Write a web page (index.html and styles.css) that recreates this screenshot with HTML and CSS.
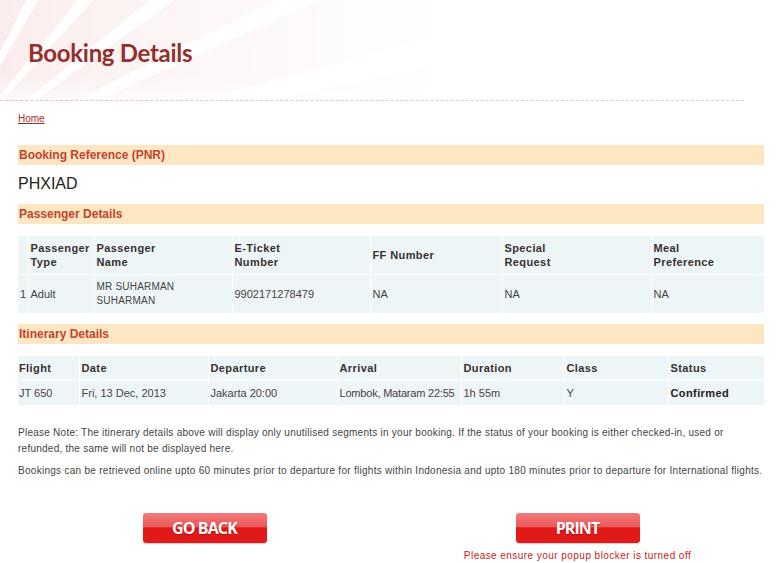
FILE: index.html
```html
<!DOCTYPE html>
<html lang="en">
<head>
    <meta charset="UTF-8">
    <title>Booking Details</title>
    <link rel="stylesheet" href="styles.css">
</head>
<body>
    <div class="page-header">
        <h1>Booking Details</h1>
    </div>
    <div class="content">
        <div class="crumbs"><a href="#">Home</a></div>

        <h2 class="section-bar">Booking Reference (PNR)</h2>
        <div class="pnr">PHXIAD</div>

        <h2 class="section-bar">Passenger Details</h2>
        <table class="grid pax">
            <colgroup>
                <col style="width:10px">
                <col style="width:66px">
                <col style="width:138px">
                <col style="width:138px">
                <col style="width:132px">
                <col style="width:149px">
                <col>
            </colgroup>
            <thead>
                <tr>
                    <th></th>
                    <th>Passenger Type</th>
                    <th>Passenger<br>Name</th>
                    <th>E-Ticket<br>Number</th>
                    <th>FF Number</th>
                    <th>Special<br>Request</th>
                    <th>Meal<br>Preference</th>
                </tr>
            </thead>
            <tbody>
                <tr>
                    <td>1</td>
                    <td>Adult</td>
                    <td class="small">MR SUHARMAN<br>SUHARMAN</td>
                    <td>9902171278479</td>
                    <td>NA</td>
                    <td>NA</td>
                    <td>NA</td>
                </tr>
            </tbody>
        </table>

        <h2 class="section-bar">Itinerary Details</h2>
        <table class="grid itin">
            <colgroup>
                <col style="width:61px">
                <col style="width:129px">
                <col style="width:129px">
                <col style="width:124px">
                <col style="width:103px">
                <col style="width:104px">
                <col>
            </colgroup>
            <thead>
                <tr>
                    <th>Flight</th>
                    <th>Date</th>
                    <th>Departure</th>
                    <th>Arrival</th>
                    <th>Duration</th>
                    <th>Class</th>
                    <th>Status</th>
                </tr>
            </thead>
            <tbody>
                <tr>
                    <td>JT 650</td>
                    <td>Fri, 13 Dec, 2013</td>
                    <td>Jakarta 20:00</td>
                    <td class="tight">Lombok, Mataram 22:55</td>
                    <td>1h 55m</td>
                    <td>Y</td>
                    <td class="status">Confirmed</td>
                </tr>
            </tbody>
        </table>

        <p class="note">Please Note: The itinerary details above will display only unutilised segments in your booking. If the status of your booking is either checked-in, used or refunded, the same will not be displayed here.</p>
        <p class="note one-line">Bookings can be retrieved online upto 60 minutes prior to departure for flights within Indonesia and upto 180 minutes prior to departure for International flights.</p>

        <div class="actions">
            <div class="action">
                <a href="#" class="btn">GO BACK</a>
            </div>
            <div class="action">
                <a href="#" class="btn">PRINT</a>
                <span class="popup-warning">Please ensure your popup blocker is turned off</span>
            </div>
        </div>
    </div>
</body>
</html>
```

FILE: styles.css
```css
body {
    margin: 0;
    font-family: "Liberation Sans", Arial, sans-serif;
    font-size: 11px;
    color: #333;
    background: #fff;
}
.page-header {
    width: 744px;
    height: 100px;
    border-bottom: 1px dashed #cfcfcf;
    background:
        linear-gradient(to right, rgba(255, 255, 255, 0) 0, rgba(255, 255, 255, 0.5) 25%, #fff 60%),
        linear-gradient(to bottom, rgba(255, 255, 255, 0) 75%, rgba(255, 255, 255, 0.6) 100%),
        repeating-conic-gradient(from -6deg at -60px 170px, #fbeded 0deg 9deg, #fff 9deg 12deg);
}
.page-header h1 {
    margin: 0;
    padding: 38px 0 0 28px;
    font-family: Lato, "Open Sans", sans-serif;
    font-size: 24px;
    font-weight: 700;
    color: #952f2d;
    letter-spacing: -0.3px;
}
.content {
    padding: 0 20px 0 18px;
}
.crumbs {
    padding-top: 12px;
    height: 32px;
    font-size: 10px;
}
.crumbs a {
    color: #a2321f;
}
.section-bar {
    margin: 0;
    height: 20px;
    line-height: 20px;
    padding-left: 1px;
    background: #fde6c2;
    color: #c4432e;
    font-size: 12px;
    font-weight: 700;
}
.pnr {
    height: 39px;
    line-height: 37px;
    font-size: 16px;
    color: #222;
}
.grid {
    width: 100%;
    table-layout: fixed;
    border-collapse: collapse;
    background: #eef5f6;
    margin-top: 12px;
}
.grid th, .grid td {
    border: 1px solid #fff;
    border-top: 0;
    text-align: left;
    vertical-align: middle;
    padding: 0 2px;
    line-height: 14px;
}
.grid tr > :first-child {
    border-left: 0;
}
.grid tr > :last-child {
    border-right: 0;
}
.grid tbody td {
    border-bottom: 0;
}
.grid th {
    font-weight: 700;
    color: #333;
    letter-spacing: 0.4px;
}
.grid td {
    color: #444;
}
.pax th, .pax td {
    height: 38px;
}
.pax + .section-bar {
    margin-top: 11px;
}
.small {
    font-size: 10px;
    letter-spacing: 0.2px;
}
.itin th, .itin td {
    height: 24px;
}
.itin td:first-child, .itin th:first-child {
    padding-left: 1px;
}
.tight {
    letter-spacing: -0.2px;
}
.status {
    font-weight: 700;
    color: #222 !important;
    letter-spacing: 0.4px;
}
.note {
    margin: 0;
    font-size: 10px;
    line-height: 16px;
    color: #444;
    letter-spacing: 0.25px;
}
.one-line {
    white-space: nowrap;
    letter-spacing: 0.28px;
}
.itin + .note {
    margin-top: 20px;
}
.note + .note {
    margin-top: 6px;
}
.actions {
    display: grid;
    grid-template-columns: 1fr 1fr;
    margin-top: 34px;
}
.action {
    display: flex;
    flex-direction: column;
    align-items: center;
}
.btn {
    display: block;
    width: 124px;
    height: 30px;
    line-height: 30px;
    border-radius: 3px;
    text-align: center;
    text-decoration: none;
    color: #fff;
    font-family: "Open Sans", sans-serif;
    font-size: 16px;
    font-weight: 700;
    letter-spacing: -0.9px;
    text-shadow: 0 1px 1px rgba(120, 0, 0, 0.5);
    background: linear-gradient(to bottom, #f27a7a 0, #ec5a5a 45%, #e01818 50%, #e21a1a 100%);
    box-shadow: 0 1px 1px rgba(0, 0, 0, 0.2);
}
.popup-warning {
    margin-top: 7px;
    font-size: 10px;
    color: #cc1a1a;
    letter-spacing: 0.45px;
}
```
